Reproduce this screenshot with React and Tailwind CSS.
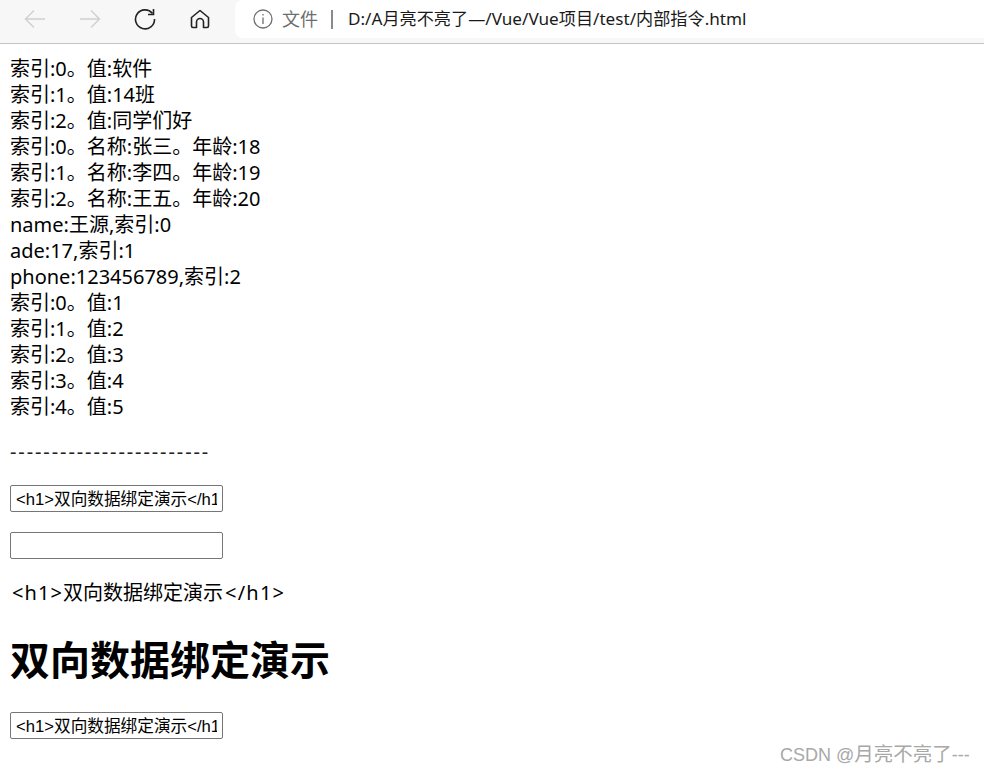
import React from "react";

const lines = [
  "索引:0。值:软件",
  "索引:1。值:14班",
  "索引:2。值:同学们好",
  "索引:0。名称:张三。年龄:18",
  "索引:1。名称:李四。年龄:19",
  "索引:2。名称:王五。年龄:20",
  "name:王源,索引:0",
  "ade:17,索引:1",
  "phone:123456789,索引:2",
  "索引:0。值:1",
  "索引:1。值:2",
  "索引:2。值:3",
  "索引:3。值:4",
  "索引:4。值:5",
];

const html = "<h1>双向数据绑定演示</h1>";

function Toolbar() {
  return (
    <div className="h-11 bg-[#f7f7f7] border-b border-[#c4c4c4] flex items-start">
      <div className="w-[235px] h-[38px] flex items-center shrink-0">
        <svg className="ml-[24px]" width="22" height="20" viewBox="0 0 22 20" fill="none" stroke="#d0d0d0" strokeWidth="1.5">
          <path d="M21 10H1.5M10 1.5 1.5 10l8.5 8.5" />
        </svg>
        <svg className="ml-[33px]" width="22" height="20" viewBox="0 0 22 20" fill="none" stroke="#d0d0d0" strokeWidth="1.5">
          <path d="M1 10h19.5M12 1.5l8.5 8.5-8.5 8.5" />
        </svg>
        <svg className="ml-[33px]" width="22" height="22" viewBox="0 0 22 22" fill="none" stroke="#222" strokeWidth="1.6">
          <path d="M18.5 5.5A9.5 9.5 0 1 0 20.5 11" />
          <path d="M19.5 1v5.5H14" />
        </svg>
        <svg className="ml-[34px]" width="20" height="20" viewBox="0 0 20 20" fill="none" stroke="#222" strokeWidth="1.6" strokeLinejoin="round">
          <path d="M10 1.5 1.5 8.5V17a1.5 1.5 0 0 0 1.5 1.5h3.5V13a3.5 3.5 0 0 1 7 0v5.5H17a1.5 1.5 0 0 0 1.5-1.5V8.5Z" />
        </svg>
      </div>
      <div className="flex-1 h-[38px] bg-white rounded-tl-lg rounded-bl-lg flex items-center leading-[38px] whitespace-nowrap">
        <svg className="ml-[18px]" width="20" height="20" viewBox="0 0 20 20" fill="none" stroke="#6e6e6e" strokeWidth="1.3">
          <circle cx="10" cy="10" r="9" />
          <path d="M10 8.5V15M10 5v1.5" />
        </svg>
        <span className="ml-[9px] text-[18px] text-[#6e6e6e]">文件</span>
        <span className="ml-[13px] w-[2px] h-[19px] bg-[#8a8a8a]" />
        <span className="ml-[15px] text-[17.15px] text-[#1a1a1a]">D:/A月亮不亮了—/Vue/Vue项目/test/内部指令.html</span>
      </div>
    </div>
  );
}

function TextBox({ value, className }) {
  return (
    <input
      readOnly
      value={value}
      className={`block w-[213px] h-[27px] border border-[#767676] rounded-[2px] px-[5px] pb-[2px] text-[16.67px] outline-none font-['Liberation_Sans','Noto_Sans_CJK_SC',sans-serif] ${className}`}
    />
  );
}

export default function App() {
  return (
    <div className="relative h-[773px] overflow-hidden bg-white text-black font-['Noto_Sans','Noto_Sans_CJK_SC',sans-serif]">
      <Toolbar />
      <div className="px-[10px] pt-[12px] text-[20px] leading-[26px]">
        {lines.map((line, i) => (
          <div key={i} className="whitespace-nowrap">{line}</div>
        ))}
        <p className="mt-[19px] tracking-[1.9px] text-[#222] whitespace-nowrap h-[26px] leading-[26px]">------------------------</p>
        <TextBox value={html} className="mt-[20px]" />
        <TextBox value="" className="mt-[20px]" />
        <p className="mt-[21px] px-[2px] whitespace-nowrap">
          <span className="tracking-[1.1px]">{"<h1>"}</span>
          双向数据绑定演示
          <span className="tracking-[1.2px] ml-[2px]">{"</h1>"}</span>
        </p>
        <h1 className="mt-[26px] text-[40px] leading-[56px] font-bold whitespace-nowrap">双向数据绑定演示</h1>
        <TextBox value={html} className="mt-[24px]" />
      </div>
      <div className="absolute left-[780px] top-[742px] text-[18px] leading-[24px] text-[#a8a8a8] whitespace-nowrap font-['Liberation_Sans','Noto_Sans_CJK_SC',sans-serif]">
        CSDN @<span className="text-[19.5px]">月亮不亮了</span>---
      </div>
    </div>
  );
}
